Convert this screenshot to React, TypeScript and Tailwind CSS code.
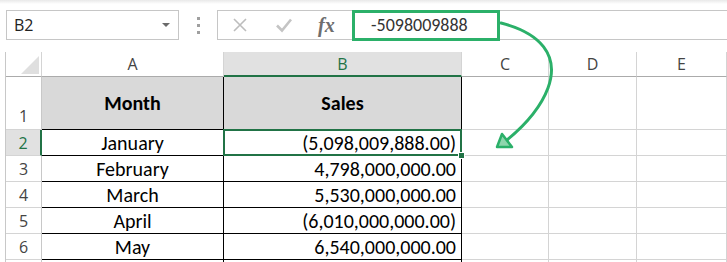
const months = [
	{ name: "January", value: "(5,098,009,888.00)" },
	{ name: "February", value: "4,798,000,000.00" },
	{ name: "March", value: "5,530,000,000.00" },
	{ name: "April", value: "(6,010,000,000.00)" },
	{ name: "May", value: "6,540,000,000.00" },
];

const grid = "border-r border-b border-[#d4d4d4]";

const App = () => {
	return (
		<div className="relative w-[727px] h-[262px] overflow-hidden bg-white font-['Open_Sans',sans-serif]">
			<div className="h-[4px] bg-gradient-to-b from-[#e9e9e9] to-white"></div>

			{/* formula bar */}
			<div className="flex items-center h-[30px] mt-[6px] ml-[6px]">
				<div className="w-[173px] h-[30px] border border-[#c6c6c6] flex items-center justify-between pl-[7px] pr-[8px]">
					<span className="text-[16px] text-[#222]">B2</span>
					<div className="w-0 h-0 border-l-[4px] border-r-[4px] border-t-[4px] border-l-transparent border-r-transparent border-t-[#6a6a6a]"></div>
				</div>
				<div className="w-[38px] flex flex-col items-center gap-[4px]">
					<div className="w-[3px] h-[3px] bg-[#a0a0a0]"></div>
					<div className="w-[3px] h-[3px] bg-[#a0a0a0]"></div>
					<div className="w-[3px] h-[3px] bg-[#a0a0a0]"></div>
				</div>
				<div className="flex-1 h-[30px] border border-r-0 border-[#c6c6c6] flex items-center">
					<div className="w-[134px] flex items-center h-full">
						<svg width="16" height="16" viewBox="0 0 16 16" className="ml-[14px]">
							<path d="M2 2 L14 14 M14 2 L2 14" stroke="#bdbdbd" strokeWidth="1.6" fill="none" />
						</svg>
						<svg width="18" height="16" viewBox="0 0 18 16" className="ml-[27px]">
							<path d="M2 8.5 L7 13.5 L16 2.5" stroke="#c4c4c4" strokeWidth="2.6" fill="none" />
						</svg>
						<span className="ml-[25px] font-['Liberation_Serif',serif] italic font-bold text-[20px] text-[#6e6e6e] leading-none">
							fx
						</span>
					</div>
					<div className="w-[148px] h-[31px] -my-px border-[3px] border-[#2bb069] flex items-center pl-[16px]">
						<span className="font-['Carlito','Lato',sans-serif] text-[18px] text-[#333]">-5098009888</span>
					</div>
				</div>
			</div>

			{/* sheet */}
			<div className="mt-[12px] ml-[5px] border-l border-[#c8c8c8] grid grid-cols-[36px_182px_238px_87px_88px_90px] grid-rows-[25px_53px_26px_26px_26px_26px_26px_26px]">
				{/* column headers */}
				<div className="relative border-r border-r-[#d4d4d4] border-b border-b-[#ababab]">
					<svg width="18" height="18" className="absolute right-[2px] bottom-[2px]">
						<path d="M18 0 L18 18 L0 18 Z" fill="#dfdfdf" />
					</svg>
				</div>
				<div className="border-r border-r-[#d4d4d4] border-b border-b-[#ababab] flex items-center justify-center text-[16px] text-[#444]">
					A
				</div>
				<div className="bg-[#e1e1e1] border-r border-r-[#d4d4d4] border-b-2 border-b-[#217346] flex items-center justify-center text-[16px] text-[#217346]">
					B
				</div>
				<div className="border-r border-r-[#d4d4d4] border-b border-b-[#ababab] flex items-center justify-center text-[16px] text-[#444]">
					C
				</div>
				<div className="border-r border-r-[#d4d4d4] border-b border-b-[#ababab] flex items-center justify-center text-[16px] text-[#444]">
					D
				</div>
				<div className="border-r border-r-[#d4d4d4] border-b border-b-[#ababab] flex items-center justify-center text-[16px] text-[#444]">
					E
				</div>

				{/* row 1 */}
				<div className="border-r border-r-[#c8c8c8] border-b border-b-[#d4d4d4] flex items-end justify-center pb-[1px] text-[16px] text-[#444]">
					1
				</div>
				<div className="bg-[#d9d9d9] border-r border-b border-black flex items-center justify-center font-['Carlito','Lato',sans-serif] font-bold text-[20px] text-black">
					Month
				</div>
				<div className="bg-[#d9d9d9] border-r border-b border-black flex items-center justify-center font-['Carlito','Lato',sans-serif] font-bold text-[20px] text-black">
					Sales
				</div>
				<div className={grid}></div>
				<div className={grid}></div>
				<div className={grid}></div>

				{months.map((m, i) => (
					<div key={m.name} className="contents">
						{i === 0 ? (
							<div className="bg-[#e1e1e1] border-r-2 border-r-[#217346] border-b border-b-[#d4d4d4] flex items-center justify-center text-[16px] text-[#217346]">
								{i + 2}
							</div>
						) : (
							<div className="border-r border-r-[#c8c8c8] border-b border-b-[#d4d4d4] flex items-center justify-center text-[16px] text-[#444]">
								{i + 2}
							</div>
						)}
						<div className="border-r border-b border-black flex items-center justify-center font-['Carlito','Lato',sans-serif] text-[20px] text-black">
							{m.name}
						</div>
						<div className="relative border-r border-b border-black flex items-center justify-end pr-[5px] font-['Carlito','Lato',sans-serif] text-[20px] text-black">
							{m.value}
							{i === 0 && (
								<div className="absolute -left-px -top-px -right-px -bottom-px border-2 border-[#217346] z-10">
									<div className="absolute -right-[5px] -bottom-[5px] w-[7px] h-[7px] bg-[#217346] border border-white"></div>
								</div>
							)}
						</div>
						<div className={grid}></div>
						<div className={grid}></div>
						<div className={grid}></div>
					</div>
				))}

				<div className="border-r border-r-[#c8c8c8]"></div>
				<div className="border-r border-black"></div>
				<div className="border-r border-black"></div>
				<div className="border-r border-[#d4d4d4]"></div>
				<div className="border-r border-[#d4d4d4]"></div>
				<div className="border-r border-[#d4d4d4]"></div>
			</div>

			{/* annotation arrow */}
			<svg className="absolute left-0 top-0 pointer-events-none z-20" width="727" height="262">
				<path
					d="M501 23 C540 33 560 55 548 88 C539 112 520 130 502 144"
					stroke="#2bb069"
					strokeWidth="3"
					fill="none"
					strokeLinecap="round"
				/>
				<path d="M497 147 L502 134 L512 147 Z" stroke="#2bb069" strokeWidth="2.5" fill="#8fd6ad" strokeLinejoin="round" />
			</svg>
		</div>
	);
};

export default App;
